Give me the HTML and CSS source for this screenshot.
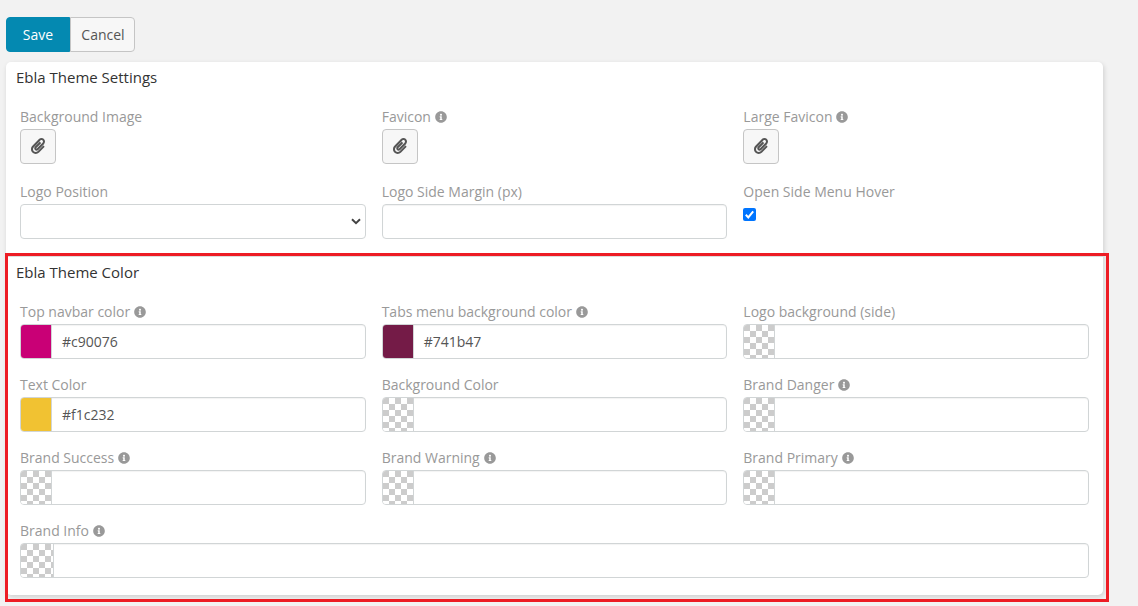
FILE: index.html
```html
<!DOCTYPE html>
<html lang="en">
<head>
<meta charset="utf-8">
<title>Ebla Theme Settings</title>
<link rel="stylesheet" href="styles.css">
</head>
<body>
<svg class="sprite" aria-hidden="true">
  <symbol id="info" viewBox="0 0 512 512"><path d="M256 8C119.043 8 8 119.083 8 256c0 136.997 111.043 248 248 248s248-111.003 248-248C504 119.083 392.957 8 256 8zm0 110c23.196 0 42 18.804 42 42s-18.804 42-42 42-42-18.804-42-42 18.804-42 42-42zm56 254c0 6.627-5.373 12-12 12h-88c-6.627 0-12-5.373-12-12v-24c0-6.627 5.373-12 12-12h12v-64h-12c-6.627 0-12-5.373-12-12v-24c0-6.627 5.373-12 12-12h64c6.627 0 12 5.373 12 12v100h12c6.627 0 12 5.373 12 12v24z"/></symbol>
  <symbol id="clip" viewBox="0 0 448 512"><path d="M43.246 466.142c-58.43-60.289-57.341-157.511 1.386-217.581L254.392 34c44.316-45.332 116.351-45.336 160.671 0 43.89 44.894 43.943 117.329 0 162.22L232.214 383.128c-29.855 30.537-78.633 30.111-107.982-.998-28.275-29.97-27.368-77.473 1.452-106.953l143.743-146.835c6.182-6.314 16.312-6.422 22.626-.241l22.861 22.379c6.315 6.182 6.422 16.312.241 22.626L171.427 319.927c-4.932 5.045-5.236 13.428-.648 18.292 4.372 4.634 11.245 4.711 15.688.165l182.849-186.851c19.613-20.062 19.613-52.725-.011-72.798-19.189-19.627-49.957-19.637-69.154 0L90.39 293.295c-34.763 35.56-35.299 93.12-1.191 128.313 34.01 35.093 88.985 35.137 123.058.286l172.06-175.999c6.177-6.319 16.307-6.433 22.626-.256l22.877 22.364c6.319 6.177 6.434 16.307.256 22.626l-172.06 175.998c-59.576 60.938-155.943 60.216-214.77-.485z"/></symbol>
</svg>
<div class="toolbar">
  <button class="btn btn-primary">Save</button><button class="btn btn-default">Cancel</button>
</div>
<main class="record">
  <section class="panel">
    <h4 class="panel-title">Ebla Theme Settings</h4>
    <div class="grid grid-settings">
      <div class="cell"><label class="label">Background Image</label><button class="attach"><svg class="clip"><use href="#clip"/></svg></button></div>
      <div class="cell"><label class="label">Favicon <svg class="info"><use href="#info"/></svg></label><button class="attach"><svg class="clip"><use href="#clip"/></svg></button></div>
      <div class="cell"><label class="label">Large Favicon <svg class="info"><use href="#info"/></svg></label><button class="attach"><svg class="clip"><use href="#clip"/></svg></button></div>
      <div class="cell"><label class="label">Logo Position</label><div class="field select"><svg class="chevron" viewBox="0 0 10 7"><path d="M1 1.2l4 4 4-4"/></svg></div></div>
      <div class="cell"><label class="label">Logo Side Margin (px)</label><div class="field"></div></div>
      <div class="cell"><label class="label">Open Side Menu Hover</label><span class="check"><svg viewBox="0 0 13 13"><path d="M2.8 6.8l2.5 2.6 4.9-6"/></svg></span></div>
    </div>
  </section>
  <section class="panel panel-color">
    <h4 class="panel-title">Ebla Theme Color</h4>
    <div class="grid grid-color">
      <div class="cell"><label class="label">Top navbar color <svg class="info"><use href="#info"/></svg></label><div class="field"><i class="swatch magenta"></i><span class="value">#c90076</span></div></div>
      <div class="cell"><label class="label">Tabs menu background color <svg class="info"><use href="#info"/></svg></label><div class="field"><i class="swatch plum"></i><span class="value">#741b47</span></div></div>
      <div class="cell"><label class="label">Logo background (side)</label><div class="field"><i class="swatch"></i></div></div>
      <div class="cell"><label class="label">Text Color</label><div class="field"><i class="swatch gold"></i><span class="value">#f1c232</span></div></div>
      <div class="cell"><label class="label">Background Color</label><div class="field"><i class="swatch"></i></div></div>
      <div class="cell"><label class="label">Brand Danger <svg class="info"><use href="#info"/></svg></label><div class="field"><i class="swatch"></i></div></div>
      <div class="cell"><label class="label">Brand Success <svg class="info"><use href="#info"/></svg></label><div class="field"><i class="swatch"></i></div></div>
      <div class="cell"><label class="label">Brand Warning <svg class="info"><use href="#info"/></svg></label><div class="field"><i class="swatch"></i></div></div>
      <div class="cell"><label class="label">Brand Primary <svg class="info"><use href="#info"/></svg></label><div class="field"><i class="swatch"></i></div></div>
      <div class="cell wide"><label class="label">Brand Info <svg class="info"><use href="#info"/></svg></label><div class="field"><i class="swatch"></i></div></div>
    </div>
    <div class="highlight"></div>
  </section>
</main>
</body>
</html>
```
FILE: styles.css
```css
* { box-sizing: border-box; }
body {
  margin: 0;
  height: 606px;
  overflow: hidden;
  padding: 17px 35px 0 6px;
  background: #f2f2f2;
  color: #333;
  font: 14px/20px "Open Sans", sans-serif;
}
.sprite { display: none; }
.toolbar { display: flex; height: 35px; margin-bottom: 10px; }
.btn { font: inherit; padding: 0; height: 35px; border: 1px solid #c5c5c5; }
.btn-primary { width: 64px; background: #0489b1; border-color: #0489b1; color: #fff; font-weight: 500; border-radius: 4px 0 0 4px; }
.btn-default { width: 65px; padding-left: 1px; background: #f7f7f7; color: #555; border-radius: 0 4px 4px 0; }
.record { background: #fff; border-radius: 5px; box-shadow: 1px 2px 5px rgba(0, 0, 0, .15); height: 533px; }
.panel { height: 194px; padding: 5px 14px 0; }
.panel-color { position: relative; height: 339px; border-top: 1px solid #ddd; }
.panel-title { margin: 0 0 0 -4px; font-size: 15px; line-height: 20px; font-weight: 400; }
.grid { display: grid; grid-template-columns: repeat(3, minmax(0, 1fr)); column-gap: 16px; padding-top: 20px; }
.grid-settings { grid-auto-rows: 75px; }
.grid-color { grid-auto-rows: 73px; }
.wide { grid-column: 1 / -1; }
.label { display: flex; align-items: center; gap: 4px; height: 22px; line-height: 20px; padding-bottom: 2px; color: #999; white-space: nowrap; }
.info { width: 12px; height: 12px; margin-bottom: 1px; fill: #999; }
.attach { display: flex; align-items: center; justify-content: center; width: 36px; height: 35px; padding: 0 0 1px; border: 1px solid #c5c5c5; border-radius: 4px; background: #f7f7f7; }
.clip { width: 14px; height: 16px; fill: #555; }
.field { display: flex; align-items: stretch; height: 35px; border: 1px solid #d1d5d6; border-radius: 4px; background: #fff; box-shadow: inset 0 1px 1px rgba(0, 0, 0, .05); overflow: hidden; }
.select { justify-content: flex-end; align-items: center; padding-right: 4px; box-shadow: none; }
.chevron { width: 10px; height: 7px; fill: none; stroke: #444; stroke-width: 2; }
.check { display: block; width: 13px; height: 13px; margin-top: 4px; border-radius: 2px; background: #0075ff; }
.check svg { display: block; fill: none; stroke: #fff; stroke-width: 2; }
.swatch { width: 31px; border-right: 1px solid #d1d5d6; background: conic-gradient(#fff 25%, #ccc 0 50%, #fff 0 75%, #ccc 0) 0 0 / 12px 12px; }
.wide .swatch { width: 33px; }
.magenta { background: #c90076; }
.plum { background: #741b47; }
.gold { background: #f1c232; }
.value { padding-left: 10px; line-height: 34px; color: #555; }
/* Callout frame drawn over the panel edges */
.highlight { position: absolute; top: -4px; left: -1px; width: 1104px; height: 349px; border: 3px solid #ed1c24; }
```
